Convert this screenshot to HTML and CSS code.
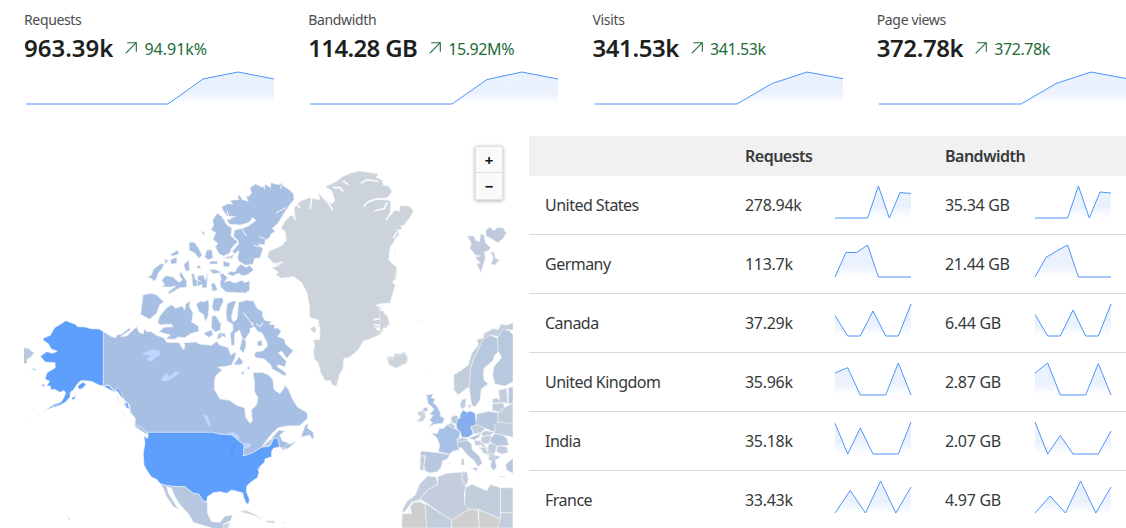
FILE: index.html
```html
<!DOCTYPE html>
<html lang="en">
<head>
<meta charset="utf-8">
<title>Traffic overview</title>
<link rel="stylesheet" href="styles.css">
</head>
<body>
<svg class="defs" width="0" height="0" aria-hidden="true">
  <defs>
    <linearGradient id="fade" x1="0" y1="0" x2="0" y2="32" gradientUnits="userSpaceOnUse">
      <stop offset="0" stop-color="#e9f1fe"/><stop offset=".65" stop-color="#ebf2fe"/><stop offset="1" stop-color="#fff"/>
    </linearGradient>
    <symbol id="up" viewBox="0 0 12 12"><path d="M.7 11.3 11.3.7M2.2.7h9.1v9.1" fill="none" stroke="#1d6b3a" stroke-width="1.1"/></symbol>
  </defs>
</svg>
<section class="kpis">
  <article class="kpi"><h2>Requests</h2><div class="figures"><strong>963.39k</strong><svg class="arrow"><use href="#up"/></svg><span>94.91k%</span></div>
    <svg class="trend" viewBox="0 0 248 32"><path class="area" d="M142 32 177 7 212 0 248 7V32Z"/><path class="line" d="M0 32H142L177 7 212 0 248 7"/></svg></article>
  <article class="kpi"><h2>Bandwidth</h2><div class="figures"><strong class="tight">114.28 GB</strong><svg class="arrow"><use href="#up"/></svg><span class="tight">15.92M%</span></div>
    <svg class="trend" viewBox="0 0 248 32"><path class="area" d="M142 32 177 7.5 212 0 248 7V32Z"/><path class="line" d="M0 32H142L177 7.5 212 0 248 7"/></svg></article>
  <article class="kpi"><h2>Visits</h2><div class="figures"><strong class="snug">341.53k</strong><svg class="arrow"><use href="#up"/></svg><span class="tight">341.53k</span></div>
    <svg class="trend" viewBox="0 0 248 32"><path class="area" d="M142 32 177 11.5 212 0 248 6.7V32Z"/><path class="line" d="M0 32H142L177 11.5 212 0 248 6.7"/></svg></article>
  <article class="kpi"><h2>Page views</h2><div class="figures"><strong class="snug">372.78k</strong><svg class="arrow"><use href="#up"/></svg><span class="tight">372.78k</span></div>
    <svg class="trend" viewBox="0 0 248 32"><path class="area" d="M142 32 177 11.5 212 0 248 6.7V32Z"/><path class="line" d="M0 32H142L177 11.5 212 0 248 6.7"/></svg></article>
</section>
<main class="geo">
  <div class="map">
    <svg class="world" viewBox="24 136 489 392">
      <g transform="translate(20 310) scale(.33333)">
        <path class="ru" d="M0 112 25 115 42 130 32 142 22 147 20 160 0 162Z"/>
        <path class="ca" d="M250 65 275 80 288 83 292 73 302 74 328 54 332 59 302 80 320 78 350 50 356 66 370 72 373 57 382 66 392 64 408 75 432 84 440 97 478 98 484 110 492 119 495 105 489 99 527 96 540 103 575 106 590 94 599 105 625 113 632 135 648 125 645 143 635 165 619 169 593 172 607 179 587 197 583 215 584 240 600 267 628 271 650 286 674 294 677 322 690 340 697 333 694 300 710 285 714 263 703 244 704 218 699 188 725 187 745 194 759 210 762 239 780 251 795 230 793 221 806 240 817 266 832 291 861 308 863 325 839 347 800 348 775 353 755 371 725 410 744 400 765 373 777 361 795 363 779 376 787 392 811 401 829 394 812 409 790 420 784 413 779 410 773 385 762 385 750 408 725 412 695 430 670 438 672 405 660 395 635 375 595 372 580 367H382L365 358 345 346 346 325 331 307 329 285 313 270 300 250 285 242 279 238 265 224 250 228Z"/>
        <path class="us" d="M250 65V228L236 225 215 214 192 212 182 212 176 218 169 226 161 239 151 247 150 261 137 276 115 288 103 290 77 301 103 283 123 277 131 264 137 249 132 241 121 247 104 238 93 239 91 228 80 227 89 214 75 207 81 188 106 173 105 158 76 156 61 139 80 125 98 130 112 124 94 117 85 101 70 91 70 85 91 76 104 53 122 42 138 32 155 39 165 42 173 50 195 51 212 56 237 57Z"/>
        <path class="us" d="M32 175 45 177 48 183ZM63 227 72 222 74 230ZM174 227 190 216 198 224 185 237 175 237ZM153 265 169 257 161 270ZM97 291 116 283 108 291ZM143 621 149 627 146 630ZM250 228 265 226 285 245 276 242ZM287 235 296 235 311 266 304 262ZM312 280 323 278 328 296 320 294Z"/>
        <path class="coast" d="M15 328 18 326M50 319 63 311M69 307 77 303M117 607H119M138 617 141 619M291 256 301 280M302 269 311 288M309 304 320 327M294 246 322 289"/>
        <path class="ca" d="M343 345 365 351 386 374 375 370 346 351Z"/>
        <path class="us" d="M382 367 580 367 595 372 635 375 660 395 672 405 670 438 695 430 725 412 750 408 762 385 773 385 779 410 760 415 754 427 755 440 735 447 734 456 718 471 722 478 714 475 717 488 712 503 690 518 680 529 679 545 688 568 687 579 680 582 672 564 668 548 655 545 635 540 620 550 600 545 580 548 562 560 560 577 545 570 537 553 520 550 505 540 495 530 470 530 440 527 422 522 410 508 395 502 380 480 372 465 370 430 375 400 372 377 382 386 385 375Z"/>
        <path class="mx" d="M422 522 440 527 470 530 495 530 520 550 537 553 552 575 562 577 562 610 575 635 600 637 615 618 638 615 632 632 610 642 620 660 580 655 520 637 506 612 481 585 465 560 455 535 440 530 445 550 475 598 460 590 440 560 430 535Z"/>
        <path class="none" d="M660 605 678 601 705 613 727 628 705 617ZM735 632 762 632 764 640 742 637ZM783 638 795 637 791 640ZM610 643 630 638 625 655 610 655Z"/>
        <path class="lake" d="M364 133 385 122 402 117 419 122V136L405 143 399 153 387 154 380 145 393 137ZM425 205 439 189 450 200 463 186 481 185 459 205 438 214H425ZM550 312 563 318 572 345 569 352 559 335ZM625 367 642 367 658 378V390L648 385 638 375 622 375ZM670 399 687 398 694 409 678 417Z"/>
        <path class="lake2" d="M633 402 649 400 648 408 642 422 643 440 634 439 632 421ZM603 379 620 378 613 390Z"/>
        <path class="mx" d="M730 407 747 392 758 384 750 405Z"/>
        <path class="ca" d="M843 381 856 345 865 341 862 354 879 366 882 384 876 388 870 375ZM789 414 802 403 821 402 803 416ZM662 186 673 185 670 194ZM680 175 687 169 690 179Z"/>
      </g>
      <g class="ca" transform="translate(130 170) scale(.33333)">
        <path d="M346 76 354 81 365 69 360 53 377 42 397 52 406 43 418 51 424 38 444 44 456 40 460 48 478 59 491 72 492 89 478 106 463 128 445 158 427 175 435 184 422 193 419 203 405 211 405 224 385 222 399 236 390 263 373 266 369 282 347 286 326 273 323 263 327 241 313 252 307 244 326 221 324 211 311 200 313 181 340 174 354 169 378 151 367 143 358 157 331 165 299 163 290 150 317 139 292 139 278 120 275 110 294 101 308 103 301 91 327 89 323 80 328 75 338 89 355 94Z"/>
        <path d="M262 129 277 141 290 164 305 174 303 198 323 215 304 235 300 249 281 258 267 251 256 230 264 220 249 209 257 188 243 179 251 166 248 150Z"/>
        <path d="M290 310 303 304 315 306 323 291 332 283 349 292 359 286 371 300 354 313 339 318 325 310 307 318ZM280 311 293 323 283 337 298 332 313 339 337 331 343 338 359 332V361L346 369 288 366 272 351 270 336 274 327 269 311ZM39 375 61 370 79 374 102 396 89 404 80 430 58 448 32 433Z"/>
        <path d="M125 404 137 415 156 408 164 420 167 403 181 392 178 411 189 428 185 456 205 468 207 484 181 491 164 503 144 501 135 508 108 507 121 495 88 486 101 472 130 470 123 462 93 465 83 459 88 440 110 413ZM95 331 107 317 129 321 147 337 157 330 149 318 151 303 165 326 170 334 169 352 149 353 118 372 114 367 138 348 121 351 93 350 104 344ZM53 322 64 315 70 298 91 282 102 282 98 294 85 308 80 325 70 335 67 326ZM177 217 193 217 206 235 216 256 207 265 194 249 178 241ZM214 184 223 186 222 198ZM231 239 246 240 249 264 234 269 224 260Z"/>
        <path d="M121 254 143 240 147 252 127 258ZM121 270 140 261 141 279 124 283ZM104 267 116 272 106 281ZM185 310 193 313 196 329 204 331 199 350 188 347ZM203 318 220 315 226 331 232 309 231 353 216 354 216 343 201 350ZM238 298 261 300 274 307 250 312ZM240 274 262 273 262 282 239 282ZM243 343 253 338 263 359 248 364ZM280 273 301 280 296 291 280 289ZM280 265 299 257 304 264ZM299 260 310 253 306 269Z"/>
        <path d="M199 402 213 393 219 396 235 390 237 407 235 437 226 455 220 433 207 425ZM251 385 277 383 280 393 267 424 252 423 246 412ZM246 438 257 437 273 463 271 480 256 486 244 474ZM227 486 245 480 249 495 236 502 222 492ZM265 491 276 486 274 503 261 508ZM161 285 176 269 179 301 168 304ZM202 286 211 288 211 295 200 294Z"/>
      </g>
      <g transform="translate(190 310) scale(.33333)">
        <path class="ca" d="M133 -28 112 -20 108 9 111 33 128 43 129 61 121 70 124 107 133 105 134 70 148 60 157 84 149 117 160 129 168 109 167 85 180 65 180 55 194 50 201 63 216 69 231 97 232 108 218 123 201 125 192 132 197 143 221 146 242 164 246 176 285 198 289 190 262 170 265 164 285 171 289 154 265 128 276 124 290 145 310 122 286 102 283 87 263 80 274 63 263 54 253 55 254 45 238 43 245 35 224 31 216 15 219 5 203 -3 196 -15 191 -27 169 -29 146 -23 143 10 141 27 130 36 124 24 129 0 138 -24Z"/>
        <path class="ca" d="M201 95 215 91 217 106 204 109ZM131 164 147 140 160 156 151 165ZM153 189 162 185 160 195ZM91 72 105 69 107 83 97 78Z"/>
        <path class="fjord" d="M160 8 176 28 187 45M199 42 211 50 219 37M188 37V48M159 84 171 97"/>
      </g>
      <g transform="translate(250 160) scale(.33333)">
        <path class="gl" d="M226 80 258 65 276 51 300 40 330 33 386 42 378 51 397 61 399 75 416 78 426 95 414 111 397 117 421 123 422 145 420 167 435 151 448 155 450 137 477 138 490 153 479 174 459 198 452 195 456 208 442 210 447 224 439 232 432 245 420 262 416 300 428 312 440 320 438 355 427 367 436 375 426 409 420 429 398 430 380 434 402 450 404 469 417 491 408 504 372 501 382 511 392 512 402 511 386 525 352 540 341 541 325 569 300 590 281 596 279 626 270 640 259 679 247 674 240 660 226 663 213 640 204 606 193 597 191 570 195 557 189 540 210 538 209 508 205 480 178 471 179 438 171 398 154 366 131 350 92 354 78 344 86 336 66 324 90 315 70 309 52 290 57 274 81 264 99 254 108 238 106 215 93 205 106 182 123 165 136 174 132 143 152 123 180 113 210 120 205 100 244 132 255 122 244 91Z"/>
        <path class="gl" d="M412 588 431 592 434 581 453 581 463 575 474 592 471 610 437 624 418 614ZM180 506 193 498 199 511 193 519Z"/>
        <path class="fjord wide" d="M180 147 186 112M212 105 236 130 248 150M341 140 355 125 383 116 407 118M374 153 404 145 411 126M409 180 423 157 425 143M332 70 350 59 385 64M249 83 270 83 280 94M227 84 249 103M128 157 135 180M440 216 430 235M379 437 403 437M387 445 410 456M371 479 395 475 415 491M371 493 398 499M192 487 211 508M68 316 97 306M138 133 151 143M279 62 294 74"/>
        <path class="fjord" d="M402 581 419 595M402 594 420 600M107 226 107 246M442 207 448 220M431 344 441 357"/>
        <path class="coast" d="M512 487 518 484M524 646 528 647M434 275 436 292M440 375 444 383"/>
        <path class="ca" d="M527 706 538 703 533 715Z"/>
      </g>
      <g class="fjord" transform="translate(130 170) scale(.33333)">
        <path d="M403 42V58M421 40V53M455 42 452 57M335 175 349 198M291 123 300 151M438 129 468 113M371 226 393 231M388 199 405 207M292 307 308 300M197 325 212 336"/>
      </g>
      <g transform="translate(380 310) scale(.33333)">
        <path class="gl" d="M0 0 22 18 29 43 13 49 0 75Z"/>
        <path class="no" d="M221 195 245 180 265 165 275 130 295 105 291 88 310 85 312 70 341 55 355 60 363 42 380 46 399 38V62L385 58 370 62 360 80 330 75 310 95 295 120 280 150 272 175 270 210 268 232 261 234 235 255 222 240Z"/>
        <path class="se" d="M305 95 330 75 352 85 355 125 342 138 340 150 312 175 310 190 312 211 325 222 304 236 300 270 285 290 275 285 268 235 272 175 280 150 295 120Z"/>
        <path class="se" d="M352 85 369 58 388 62 399 75V215L375 228 345 222 338 195 342 170 359 150 365 141 355 125ZM385 234 399 230V282L385 280Z"/>
        <path class="no" d="M356 240 380 235 383 281 368 277 338 280 338 266 352 265 359 271ZM337 282 369 278 374 295 360 308 337 301ZM354 305 374 292 399 280V345L353 335ZM245 270 258 265 257 290 246 298 240 286ZM263 286 273 283 270 298Z"/>
        <path class="gb" d="M144 255 159 252 154 264 165 266 160 280 169 286 182 309 180 318 193 325 188 340 162 343 146 352 158 337 149 331 159 316 149 313 162 298 156 290 145 282 141 267ZM133 293 142 293 142 304 126 302Z"/>
        <path class="gl" d="M119 303 134 303 137 321 128 335 111 334 122 322 111 310ZM20 144 37 150 43 139 60 137 72 127 82 145 78 157 50 174 27 163Z"/>
        <path class="fr" d="M153 369 171 372 179 355 190 356 203 341 230 359 241 364 237 383 230 388 235 407 238 418 214 426 210 433 175 425 179 405 171 383Z"/>
        <path class="de" d="M250 300 260 307 272 303 285 310 290 345 272 352 280 371 265 382 245 382 241 365 231 357 228 341 230 328 240 324 241 312Z"/>
        <path class="es" d="M123 423 174 428 210 434 202 447 187 453 184 471 172 485 149 489 135 482 131 466 137 438 120 437ZM213 322 225 316 235 319 229 341 215 338ZM290 312 327 304 353 308 354 345 341 365 304 350 288 345ZM232 394 245 388 261 390 275 403 276 418 298 439 307 459 295 470 281 451 259 432 245 413 233 414ZM245 447H252V465H244ZM275 475 292 472 291 484ZM272 382 296 373 303 368 298 381 283 390 264 385Z"/>
        <path class="no" d="M121 439 135 437 130 481 120 481ZM200 346 212 339 224 345 226 357 214 352ZM231 386 252 383 266 389 250 393 232 396ZM272 350 291 343 317 356 302 368 283 372ZM283 391 300 393 314 405 324 423 303 405 286 406ZM303 369 317 362 344 366 331 376 308 379ZM303 382 324 375 341 382 325 402 304 399ZM345 343 355 336 399 342V382L366 374 344 371ZM325 405 336 398 350 408 345 430 332 442 321 430ZM300 413 317 412 326 434 309 429ZM352 407 380 410 385 427 365 433 349 424ZM327 434 337 429 350 440 339 455 326 449Z"/>
        <path class="es" d="M343 371 366 374 380 384 386 406 351 408 328 393ZM333 456 350 437 362 440 345 451 350 471 341 482 332 470ZM377 463 399 445V490L380 480ZM358 498 378 500 362 502Z"/>
        <path class="af1" d="M144 497 169 502 173 523 144 539 119 569 95 577 74 605 65 605 81 574 106 555 119 522ZM174 500 201 490 257 485 245 498 257 530 252 551 255 585 270 596 214 631 120 566 144 539 173 523ZM248 485 261 486 265 510 257 531 243 510Z"/>
        <path class="no" d="M256 533 276 523 321 542 331 524 361 533V626L295 598 267 598 254 584ZM362 534 399 533V608H362ZM362 608H399V654H355V626H362ZM135 580 214 631V654H140Z"/>
        <path class="sand" d="M66 612 95 611 90 590 100 577 121 575 135 584 140 654H66ZM215 631 267 598 293 599 298 654H215ZM296 599 361 627 354 654H297Z"/>
        <path class="coast" d="M66 611 85 611 87 595 102 578 122 576V568M295 405 309 424 325 410M300 400 330 421 322 439M207 462 213 459M120 39 128 33M135 195H138M201 461 209 459M66 559 69 556M297 87 308 88M304 79 320 74M349 48 353 62"/>
      </g>
      <path class="sv" transform="translate(450 130) scale(.33333)" d="M52 318 72 318 77 331 88 336 92 312 103 315 106 338 123 354 112 363 103 367 106 383 93 428 80 401 91 399 75 382 91 378 76 375 60 355 64 340ZM106 303 119 291 132 302 141 293 158 293 169 309 160 325 143 338 122 325 109 319ZM123 365 132 367 136 384 148 390 134 405 123 403 130 384Z"/>
    </svg>
    <div class="zoom"><button>+</button><button>−</button></div>
  </div>
  <table class="countries">
    <thead><tr><th></th><th>Requests</th><th>Bandwidth</th></tr></thead>
    <tbody>
      <tr><td>United States</td>
        <td><div class="cell">278.94k<svg class="spark" viewBox="0 0 76 32"><path class="area" d="M32.6 32 43.4 0 54.3 32 65 6.5 76 7.5V32Z"/><path class="line" d="M0 32H32.6L43.4 0 54.3 32 65 6.5 76 7.5"/></svg></div></td>
        <td><div class="cell">35.34 GB<svg class="spark" viewBox="0 0 76 32"><path class="area" d="M32.6 32 43.4 0 54.3 32 65 6 76 7V32Z"/><path class="line" d="M0 32H32.6L43.4 0 54.3 32 65 6 76 7"/></svg></div></td></tr>
      <tr><td>Germany</td>
        <td><div class="cell">113.7k<svg class="spark" viewBox="0 0 76 32"><path class="area" d="M0 32 10.9 7.5H21.7L32.6 0 43.4 32Z"/><path class="line" d="M0 32 10.9 7.5H21.7L32.6 0 43.4 32H76"/></svg></div></td>
        <td><div class="cell">21.44 GB<svg class="spark" viewBox="0 0 76 32"><path class="area" d="M0 32 10.9 12.5 21.7 6 32.6 0 43.4 32Z"/><path class="line" d="M0 32 10.9 12.5 21.7 6 32.6 0 43.4 32H76"/></svg></div></td></tr>
      <tr><td>Canada</td>
        <td><div class="cell">37.29k<svg class="spark" viewBox="0 0 76 32"><path class="area" d="M0 11.5 12.7 32H25.3L38 7 50.7 32H63.3L76 0V32H0Z"/><path class="line" d="M0 11.5 12.7 32H25.3L38 7 50.7 32H63.3L76 0"/></svg></div></td>
        <td><div class="cell">6.44 GB<svg class="spark" viewBox="0 0 76 32"><path class="area" d="M0 10.5 12.7 32H25.3L38 6 50.7 32H63.3L76 0V32H0Z"/><path class="line" d="M0 10.5 12.7 32H25.3L38 6 50.7 32H63.3L76 0"/></svg></div></td></tr>
      <tr><td>United Kingdom</td>
        <td><div class="cell">35.96k<svg class="spark" viewBox="0 0 76 32"><path class="area" d="M0 10 12.7 4.7 25.3 32H50.7L63.3 0 76 32H0Z"/><path class="line" d="M0 10 12.7 4.7 25.3 32H50.7L63.3 0 76 32"/></svg></div></td>
        <td><div class="cell">2.87 GB<svg class="spark" viewBox="0 0 76 32"><path class="area" d="M0 10 12.7 0 25.3 32H50.7L63.3.5 76 32H0Z"/><path class="line" d="M0 10 12.7 0 25.3 32H50.7L63.3.5 76 32"/></svg></div></td></tr>
      <tr><td>India</td>
        <td><div class="cell">35.18k<svg class="spark" viewBox="0 0 76 32"><path class="area" d="M0 1.3 12.7 32 25.3 6 38 32H63.3L76 0V32H0Z"/><path class="line" d="M0 1.3 12.7 32 25.3 6 38 32H63.3L76 0"/></svg></div></td>
        <td><div class="cell">2.07 GB<svg class="spark" viewBox="0 0 76 32"><path class="area" d="M0 0 12.7 32 25.3 13.5 38 32H63.3L76 9V32H0Z"/><path class="line" d="M0 0 12.7 32 25.3 13.5 38 32H63.3L76 9"/></svg></div></td></tr>
      <tr><td>France</td>
        <td><div class="cell">33.43k<svg class="spark" viewBox="0 0 76 32"><path class="area" d="M0 32 15.2 9.5 30.4 32 45.6 0 60.8 32 76 6V32Z"/><path class="line" d="M0 32 15.2 9.5 30.4 32 45.6 0 60.8 32 76 6"/></svg></div></td>
        <td><div class="cell">4.97 GB<svg class="spark" viewBox="0 0 76 32"><path class="area" d="M0 32 15.2 15 30.4 32 45.6 0 60.8 32 76 6V32Z"/><path class="line" d="M0 32 15.2 15 30.4 32 45.6 0 60.8 32 76 6"/></svg></div></td></tr>
    </tbody>
  </table>
</main>
</body>
</html>
```
FILE: styles.css
```css
* { box-sizing: border-box; }
body { margin: 0; height: 528px; overflow: hidden; background: #fff; color: #36393a; font: 16px/24px "Noto Sans", sans-serif; }
.defs { position: absolute; }
.kpis { display: grid; grid-template-columns: repeat(4, 1fr); gap: 32px; width: 1129px; height: 136px; padding: 10px 0 0 24px; }
h2 { margin: 0; font-size: 14px; line-height: 20px; font-weight: 400; letter-spacing: -.35px; color: #4a4d4e; }
.figures { display: flex; align-items: center; height: 36px; color: #1d6b3a; white-space: nowrap; }
.figures strong { font-size: 24px; font-weight: 600; color: #1d1f20; }
.figures strong.tight { letter-spacing: -.65px; }
.figures strong.snug { letter-spacing: -.42px; }
.figures span { padding-top: 1px; }
.figures span.tight { letter-spacing: -.4px; }
.arrow { width: 12px; height: 12px; margin: 0 7px 0 12px; }
svg { display: block; }
.trend { width: 248px; height: 32px; margin: 6px 0 0 2px; overflow: visible; }
.area { fill: url(#fade); }
.line { fill: none; stroke: #4d94fb; stroke-width: 1; }
.geo { display: flex; gap: 16px; padding-left: 24px; }
.map { position: relative; width: 489px; height: 392px; flex: none; }
.world { width: 489px; height: 392px; }
.world path { vector-effect: non-scaling-stroke; stroke: #f0f2f4; stroke-width: .6; stroke-linejoin: round; }
.ca { fill: #a8bfe4; }
.us { fill: #5e9efc; }
.mx, .ru, .es { fill: #b7c7df; }
.se { fill: #b8c8df; }
.sv { fill: #bfcbdd; }
.no { fill: #c3cedd; }
.gl { fill: #ccd3da; }
.none { fill: #cbd1d9; }
.gb, .fr { fill: #a7c0e6; }
.de { fill: #84aeed; }
.af1 { fill: #c4cddd; }
.sand { fill: #cfcfcf; }
.world .lake { fill: #bdd6ff; stroke: none; }
.world .lake2 { fill: #599afb; stroke: none; }
.coast { fill: none; }
.world .coast { stroke: #e1e5e9; }
.fjord { fill: none; }
.world path.fjord, .world .fjord path { stroke: #f7faff; stroke-width: 1; }
.world path.wide { stroke-width: 1.7; }
.zoom { position: absolute; left: 451px; top: 10px; width: 28px; display: grid; grid-template-rows: 25px 27px; background: #fafafa; border: 1px solid #e3e3e3; box-shadow: 0 1px 4px rgba(0,0,0,.3); }
.zoom button { padding: 0; border: 0; background: none; font: 700 15px/24px "Noto Sans", sans-serif; color: #111; }
.zoom button + button { border-top: 1px solid #ddd; }
.countries { width: 600px; flex: none; border-collapse: separate; border-spacing: 0; table-layout: fixed; }
th, td { padding: 0 0 0 16px; text-align: left; }
th { height: 40px; background: #f1f1f1; font-weight: 600; letter-spacing: -.5px; }
td { height: 59px; border-bottom: 1px solid #d9d9d9; letter-spacing: -.52px; }
.cell { display: flex; align-items: center; justify-content: space-between; width: 166px; letter-spacing: -.3px; }
.spark { width: 76px; height: 32px; position: relative; top: -3px; overflow: visible; }
```
